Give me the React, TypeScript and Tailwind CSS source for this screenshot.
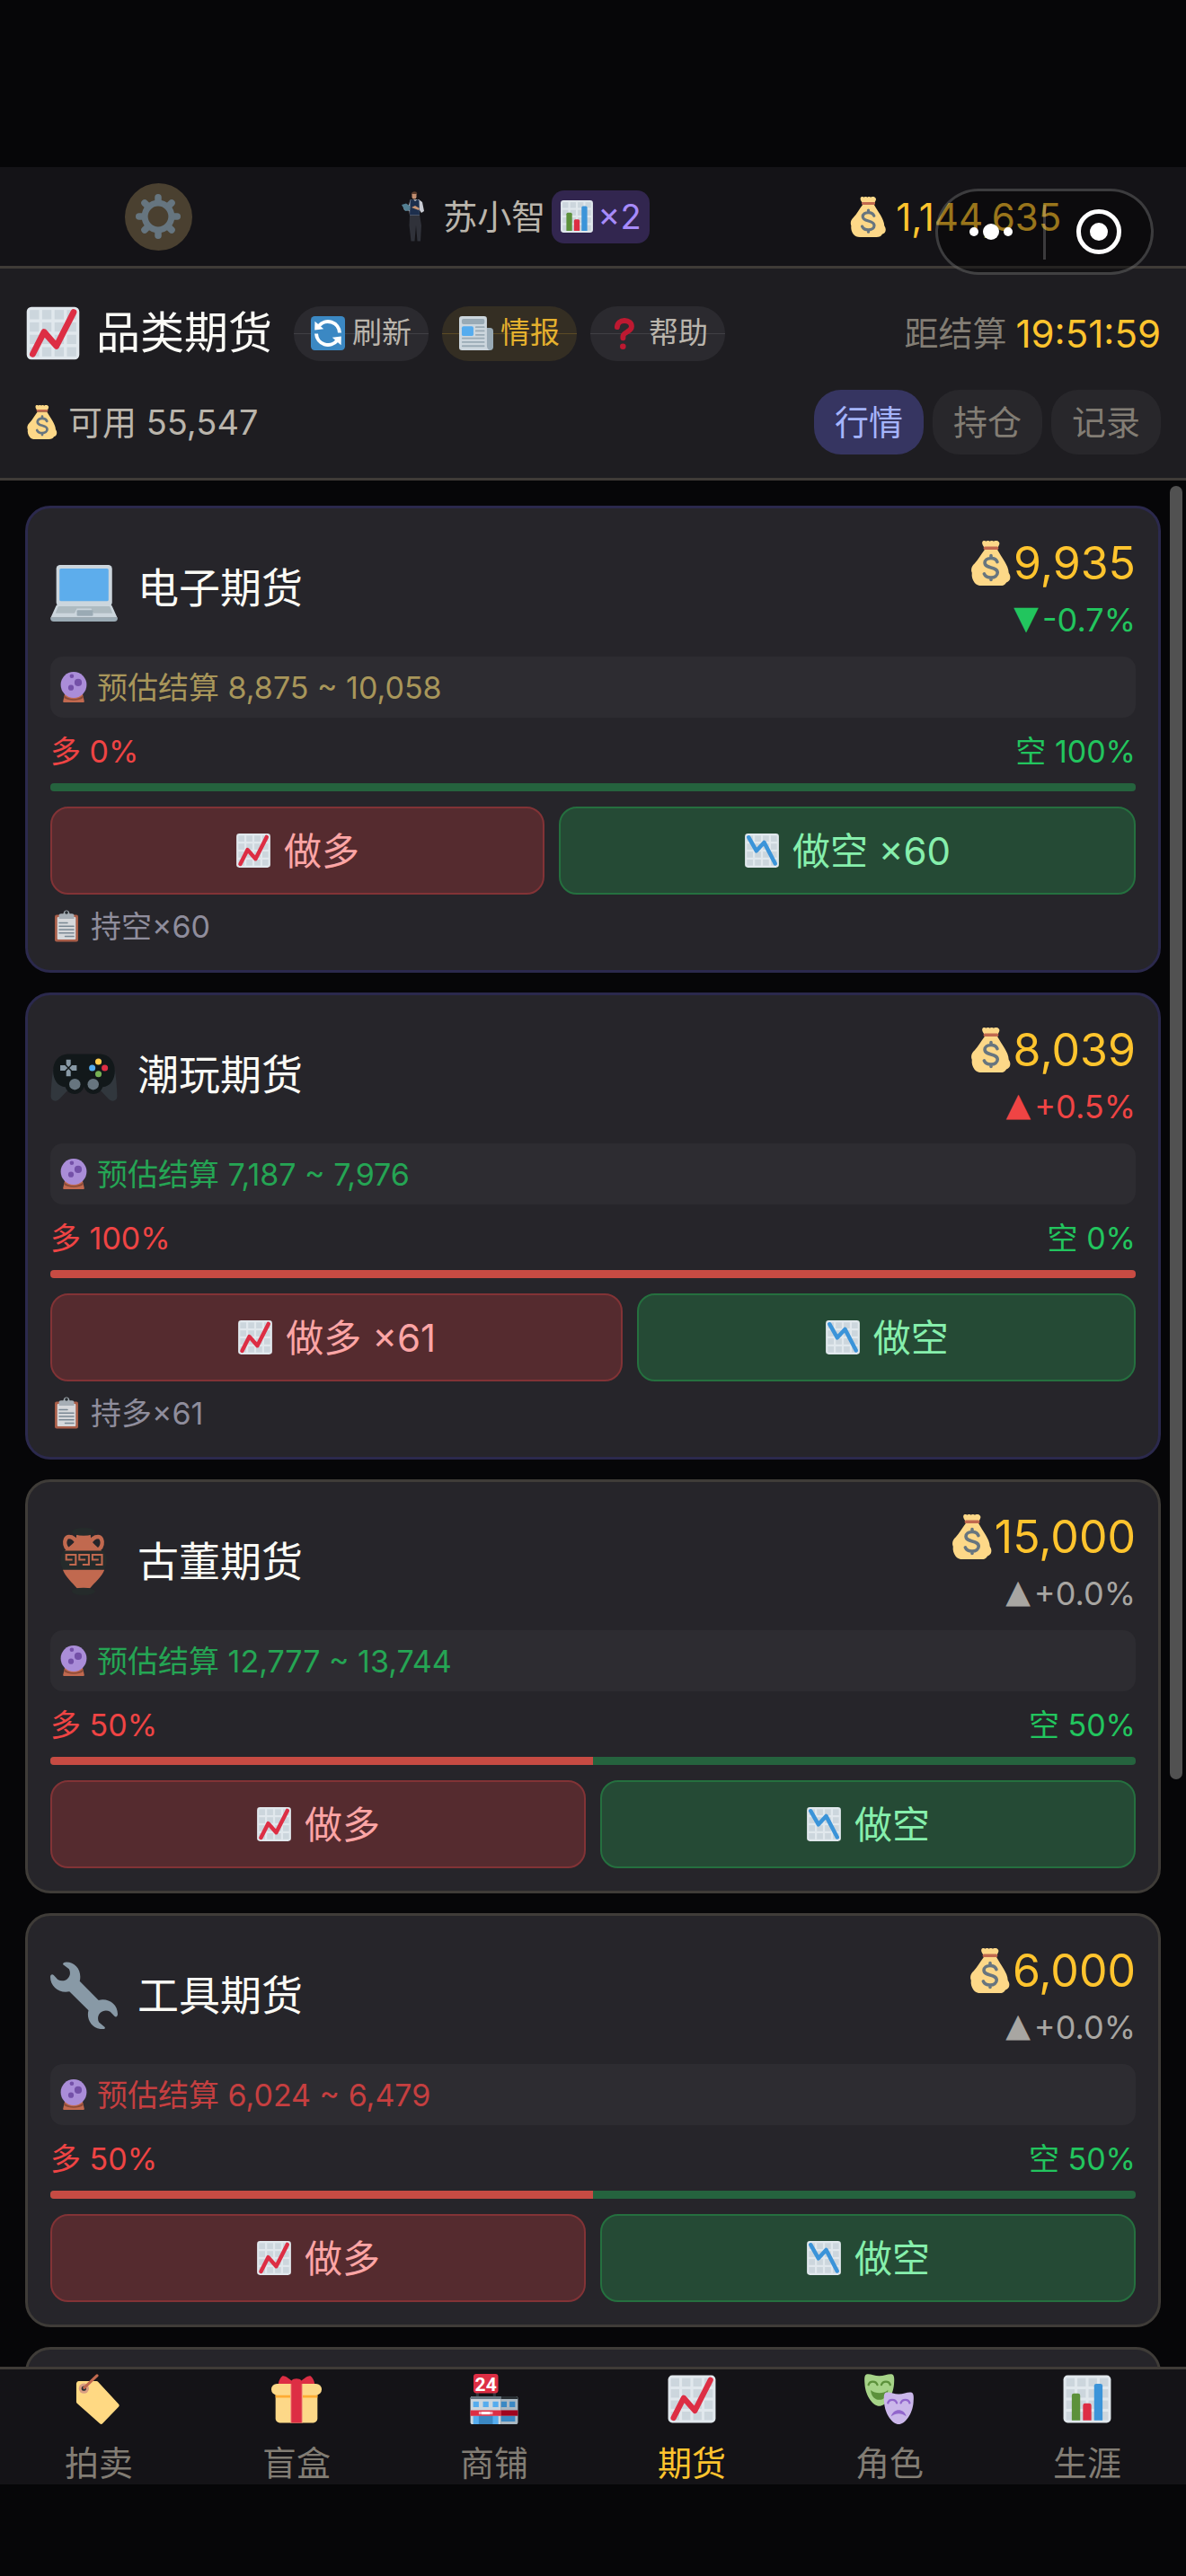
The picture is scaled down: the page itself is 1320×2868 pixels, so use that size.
import React from "react";

type IconProps = { className: string; children?: React.ReactNode };

function Icon({ className, children }: IconProps) {
  return (
    <svg viewBox="0 0 36 36" className={"shrink-0 " + className} aria-hidden="true" fill="none">
      {children}
    </svg>
  );
}

const gridSteps = [3, 11, 19, 27];

function ChartPaper() {
  return (
    <>
      <rect x="1" y="1" width="34" height="34" rx="3" fill="#E1E8ED" />
      {gridSteps.map((y) => gridSteps.map((x) => <rect key={x + "-" + y} x={x} y={y} width="6" height="6" fill="#CCD6DD" />))}
    </>
  );
}

function ChartUp({ className }: IconProps) {
  return (
    <Icon className={className}>
      <ChartPaper />
      <path d="M4.900 31.500 12.200 17.200 20.200 26.300 31.300 4.400" stroke="#DD2E44" strokeWidth="4" strokeLinecap="round" strokeLinejoin="round" />
    </Icon>
  );
}

function ChartDown({ className }: IconProps) {
  return (
    <Icon className={className}>
      <ChartPaper />
      <path d="M4.700 4.700 12.500 18.300 20.200 9.800 31.300 31" stroke="#3B94D9" strokeWidth="4" strokeLinecap="round" strokeLinejoin="round" />
    </Icon>
  );
}

function BarChart({ className }: IconProps) {
  return (
    <Icon className={className}>
      <ChartPaper />
      <path d="M7 33.200V15.500a1.500 1.500 0 0 1 1.500-1.500h3a1.500 1.500 0 0 1 1.500 1.500v17.700z" fill="#5C913B" />
      <path d="M15 33.200V22.500a1.500 1.500 0 0 1 1.500-1.500h3a1.500 1.500 0 0 1 1.500 1.500v10.700z" fill="#DD2E44" />
      <path d="M23 33.200V8.500A1.500 1.500 0 0 1 24.500 7h3A1.500 1.500 0 0 1 29 8.500v24.700z" fill="#3B94D9" />
    </Icon>
  );
}

function MoneyBag({ className }: IconProps) {
  return (
    <Icon className={className}>
      <path
        d="M13 7C9.500 11.500 8 15 4.600 18.600 2.300 20.600 1.700 23.500 2.700 25.800 2.300 29 3.200 31.500 4.800 33.600 6 35.300 8 36 10.500 36H25c3 0 4.300-.8 5.300-2.600C33.500 32.600 34.400 29 32.200 25.800 32 19.500 26.500 13.500 23 7z"
        fill="#FDD888"
      />
      <path d="M13 6C12 4.500 10.500 3 11 1c.3-1.200 2-1.400 2.900-.5 1.200-.8 2.300-.7 3.100 0 .8-.7 2.300-.7 3.200.1 1-1 2.700-1 3.500-.1C26 2 24 4 23.300 6z" fill="#FDD888" />
      <rect x="12" y="4.700" width="12" height="2.500" rx="1.100" fill="#C1694F" />
      <path
        d="M23 17c-.7-2-2.600-3-5-3-2.900 0-5 1.500-5 3.700 0 5 10.200 2.800 10.200 7.900 0 2.300-2.200 3.900-5.200 3.900-2.700 0-4.700-1-5.500-3M18 12v2M18 29.500v1.800"
        stroke="#67757F"
        strokeWidth="2.600"
        strokeLinecap="round"
      />
    </Icon>
  );
}

function Gear({ className }: IconProps) {
  const angles = [0, 45, 90, 135, 180, 225, 270, 315];
  return (
    <Icon className={className}>
      <circle cx="18" cy="18" r="10.700" stroke="#66757F" strokeWidth="5" />
      {angles.map((a) => (
        <path key={a} d="M18 6V2.700" stroke="#66757F" strokeWidth="5.400" strokeLinecap="round" transform={`rotate(${a} 18 18)`} />
      ))}
    </Icon>
  );
}

function Person({ className }: IconProps) {
  return (
    <svg viewBox="0 0 26 56" className={"shrink-0 " + className} aria-hidden="true">
      <path d="M9 26h11l2 12-1 17.500h-3.500L16 38l-1.500 17.500h-4L8.500 38z" fill="#30323a" />
      <path d="M9.500 9.500 19 9l4 3 2 10-3 2-2-3v5.500H9l-.5-5L3 21l-1-3 6-2z" fill="#c9cbd3" />
      <path d="M9.500 9.500 13 9l2 2 2.500-2 2 1 .5 16.500H9z" fill="#1d2f4d" />
      <path d="M0 15l5-1.500 4.500 3L9 21l-5 1z" fill="#537f93" />
      <path d="M11 18l4-2 5 3-1 2z" fill="#c99574" />
      <rect x="11.500" y="1" width="5" height="7.500" rx="2.200" fill="#c28e70" />
      <path d="M11 3c0-3 6-4 6.300 0z" fill="#5b3c2c" />
    </svg>
  );
}

function Refresh({ className }: IconProps) {
  return (
    <Icon className={className}>
      <rect width="36" height="36" rx="4" fill="#3B88C3" />
      <path d="M8.300 10.500A12.300 12.300 0 0 1 30.300 17.500M27.700 25.500A12.300 12.300 0 0 1 5.700 18.500" stroke="#fff" strokeWidth="3.800" />
      <path d="M4.200 5.400 4 14.600 13.500 13.600zM31.800 30.600 32 21.400 22.500 22.400z" fill="#fff" />
    </Icon>
  );
}

function Newspaper({ className }: IconProps) {
  return (
    <Icon className={className}>
      <rect x="24" y="12.300" width="12" height="23.700" rx="3.500" fill="#99AAB5" />
      <path d="M3 0h23.300a3 3 0 0 1 3 3v28c0 2 .7 4 2.700 5H3a3 3 0 0 1-3-3V3a3 3 0 0 1 3-3z" fill="#CCD6DD" />
      <rect x="2.800" y="2.800" width="24" height="5.700" rx="1.800" fill="#99AAB5" />
      <rect x="2.800" y="10.700" width="12.300" height="10.200" rx="1.800" fill="#55ACEE" />
      <path d="M17.800 11.500h8.400M17.800 15.600h8.400M17.800 19.700h8.400M3.600 23.300h22.600M3.600 27.400h22.600M3.600 31.500h22.600" stroke="#99AAB5" strokeWidth="1.700" strokeLinecap="round" />
    </Icon>
  );
}

function Question({ className }: IconProps) {
  return (
    <Icon className={className}>
      <path d="M10.300 11.500C10.500 7.200 13.500 4.800 18 4.800c4.700 0 7.500 2.500 7.500 6.200 0 6-9 5.500-9 10.200V23" stroke="#BE1931" strokeWidth="5.600" strokeLinecap="round" />
      <circle cx="16.400" cy="31.900" r="3.100" fill="#BE1931" />
    </Icon>
  );
}

function Laptop({ className }: IconProps) {
  return (
    <Icon className={className}>
      <rect x="3.200" y="5.800" width="29.800" height="22" rx="2" fill="#CCD6DD" />
      <rect x="4.900" y="7.700" width="26.200" height="17.400" rx=".8" fill="#5DADEC" />
      <path d="M4.800 26.700h26.400c1.200 0 1.700.6 2 1.500l2.600 5.800H.2l2.600-5.800c.3-.9.900-1.500 2-1.500z" fill="#CCD6DD" />
      <path d="M0 33.800h36c0 1.500-.6 2.200-1.800 2.200H1.800C.6 36 0 35.300 0 33.800z" fill="#9AAAB4" />
      <path d="M5 27.800h26c.6 0 1 .3 1.200 1l1 2.800H2.800l1-2.800c.2-.7.600-1 1.200-1z" fill="#AEBBC1" />
      <path d="M14.200 29h7.600l2 4h-11.600z" fill="#CCD6DD" />
      <rect x="14.200" y="29.900" width="8.600" height="3.100" rx=".5" fill="#9AAAB4" />
    </Icon>
  );
}

function Gamepad({ className }: IconProps) {
  return (
    <Icon className={className}>
      <path d="M1.500 15C.9 20 .3 25 .3 29.800.3 31 1.200 32 2.600 32c1 0 1.700-.4 2.300-1L11 24.500 4 12zM34.500 15c.6 5 1.200 10 1.200 14.800 0 1.200-.9 2.200-2.300 2.200-1 0-1.700-.4-2.300-1L25 24.500 32 12z" fill="#31373D" />
      <path d="M9.500 7h17c5 0 8 4 8 9 0 4.500-2.500 8.500-6.500 8.600A5.200 5.200 0 0 1 18 24.500 5.200 5.200 0 0 1 8 24.600C4 24.500 1.500 20.500 1.500 16c0-5 3-9 8-9z" fill="#12181A" />
      <path d="M8.500 10h2.400v3h3.200v2.800h-3.200v3H8.500v-3H5.300V13h3.200z" fill="#8899A6" />
      <path d="M7.900 12.600l3.600 3.600M11.500 12.600 7.900 16.200" stroke="#12181A" strokeWidth=".7" />
      <circle cx="25.700" cy="11" r="1.700" fill="#FFCC4D" />
      <circle cx="22.400" cy="14.400" r="1.700" fill="#55ACEE" />
      <circle cx="29.100" cy="14.400" r="1.700" fill="#DD2E44" />
      <circle cx="25.700" cy="17.600" r="1.700" fill="#77B255" />
      <circle cx="13.100" cy="23.100" r="3" fill="#67757F" />
      <circle cx="22.900" cy="23.100" r="3" fill="#67757F" />
    </Icon>
  );
}

function Amphora({ className }: IconProps) {
  return (
    <Icon className={className}>
      <path d="M12.500 11.500C7 13.500 6.500 4.800 10 4.800c2.300 0 3.300 1.500 4.300 3M23 11.500c5.500 2 6-6.700 2.500-6.700-2.300 0-3.300 1.500-4.300 3" stroke="#C1694F" strokeWidth="2.100" />
      <path d="M14 3.500h7.500c0 4.500 1.500 4.500 6 9H7.500c4.500-4.500 6.500-4.500 6.500-9z" fill="#C1694F" />
      <ellipse cx="17.800" cy="2.100" rx="6.200" ry="2.100" fill="#252B2B" />
      <path d="M7 12.200h21.600c2 3 2 7 .2 10.200H6.800c-1.800-3.200-1.800-7.200.2-10.200z" fill="#252B2B" />
      <path d="M6.700 22.400h22.200c-1.500 4-5 6.500-7.700 9.900h-7c-2.700-3.400-6-5.900-7.500-9.900z" fill="#C1694F" />
      <path
        d="M10.200 19.700h3.400v-5.300H8.500V17h3.300M17.200 19.700h3.400v-5.300h-5.100V17h3.300M24.200 19.700h3.400v-5.300h-5.100V17h3.300"
        stroke="#C1694F"
        strokeWidth="1"
      />
      <ellipse cx="17.700" cy="34" rx="6.200" ry="2" fill="#252B2B" />
    </Icon>
  );
}

function Wrench({ className }: IconProps) {
  return (
    <Icon className={className}>
      <path
        d="M6.700 1.400C6.900.5 7.600.2 8.600.2 12.800.2 16 3.600 16 8c0 1-.1 1.800-.3 2.400L25.800 20.600C31 19.300 36 22.800 36 28c0 1.400-1 1.900-1.700 1.100L32 26.800c-4-2.200-8 1.800-6 5.600l3 2.500c.5.500.2 1.200-.9 1.200-6.100 0-9-5.600-7.700-10.100L10.200 16C5 17.200 0 13.500 0 8.200 0 6.900 1 6.500 1.800 7.200L4 9.600c4 2.200 8-1.800 6-5.600z"
        fill="#8899A6"
      />
    </Icon>
  );
}

function CrystalBall({ className }: IconProps) {
  return (
    <Icon className={className}>
      <path d="M8 26h20l1.800 7.800c.1.700-.2 1.200-.8 1.200H7c-.6 0-.9-.5-.8-1.200z" fill="#C1694F" />
      <path d="M8 27.500c5 5 15 5 20 0l.7 2.500c-5.500 3.500-16 3.500-21.400 0z" fill="#8A4B38" />
      <circle cx="18" cy="15.500" r="14.400" fill="#AA8DD8" />
      <circle cx="15.900" cy="5.700" r="2.300" fill="#7450A8" />
      <circle cx="23" cy="12.900" r="4.100" fill="#7450A8" />
      <circle cx="15" cy="18.700" r="3.100" fill="#7450A8" />
    </Icon>
  );
}

function Clipboard({ className }: IconProps) {
  return (
    <Icon className={className}>
      <rect x="5" y="5.500" width="26" height="30" rx="2" fill="#C1694F" />
      <rect x="7.700" y="8" width="20.600" height="25" rx="1" fill="#F5F8FA" />
      <path d="M9.500 10V6.500c0-1.500 1-2.300 2.500-2.300h2.500C15 1.500 16.300.5 18 .5s3 1 3.500 3.700H24c1.500 0 2.500.8 2.500 2.300V10z" fill="#BDC7CE" />
      <circle cx="18" cy="3" r="1.800" fill="#292F33" />
      <path d="M10 14.500h9M10 18.300h16M10 22h16M10 25.800h16M16.500 29.600H26" stroke="#8899A6" strokeWidth="1.500" strokeLinecap="round" />
    </Icon>
  );
}

function Tag({ className }: IconProps) {
  return (
    <Icon className={className}>
      <path d="M3.700 6.600h12.600L31 22.600 19.700 34.400 3.400 20V7z" fill="#FFD983" stroke="#FFD983" strokeWidth="3" strokeLinejoin="round" />
      <circle cx="7.300" cy="10.400" r="3.600" fill="#D99E82" />
      <circle cx="7.300" cy="10.400" r="1.700" fill="#292F33" />
      <path d="M7.600 9.900 16.700 1.200" stroke="#C1694F" strokeWidth="2" strokeLinecap="round" />
    </Icon>
  );
}

function Gift({ className }: IconProps) {
  return (
    <Icon className={className}>
      <path d="M3 13h30v19a3 3 0 0 1-3 3H6a3 3 0 0 1-3-3z" fill="#FDD888" />
      <path d="M3 14h30v3H3z" fill="#FFAC33" />
      <rect x="0" y="7" width="36" height="8.200" rx="4" fill="#FDD888" />
      <path d="M13.500 7h9v28h-9z" fill="#F4A580" />
      <path d="M14.300 7h7.400v28h-7.400z" fill="#DD2E44" />
      <path d="M5 7C5.500 4.500 6.500 2.500 8 1.500c1.500-.7 4.500 1.700 6.500 3.300C15.500 3 20.500 3 21.500 4.800c2-1.600 5-4 6.500-3.300C29.500 2.500 30.500 4.500 31 7z" fill="#DD2E44" />
    </Icon>
  );
}

function Shop({ className }: IconProps) {
  return (
    <Icon className={className}>
      <path d="M5 13h2v4H5zM17.200 13h2v4h-2z" fill="#31373D" />
      <rect x="3.200" y="0" width="17.700" height="13.800" rx="2" fill="#DD2E44" />
      <text x="12" y="12" textAnchor="middle" fontSize="13.500" fontWeight="700" fill="#fff" className="font-['Roboto',sans-serif]">
        24
      </text>
      <path d="M2.500 16H23v20H2.500C1.500 36 1 35.500 1 34.500v-17C1 16.500 1.500 16 2.500 16z" fill="#CCD6DD" />
      <path d="M23 16h10.500c1 0 1.500.5 1.500 1.500v17c0 1-.5 1.500-1.500 1.500H23z" fill="#AAB8C2" />
      <path d="M2.500 16H23v2H1c0-1.300.5-2 1.500-2z" fill="#66757F" />
      <path d="M23 16h10.500c1 0 1.500.7 1.500 2H23z" fill="#292F33" />
      <path d="M3 19.800h4v4H3zM10 19.800h4v4h-4zM17 19.800h4v4h-4zM3 30h18v6H3z" fill="#55ACEE" />
      <path d="M23 19.800h4v4h-4zM29 19.800h4v4h-4zM7 30h10v6H7zM23 30h10v4H23z" fill="#3B88C3" />
      <path d="M1 26h22v4H1z" fill="#DD2E44" />
      <path d="M23 26h12v4H23z" fill="#A0041E" />
      <path d="M7 27h10v2H7z" fill="#F4ABBA" />
      <path d="M9 27h6v2H9z" fill="#fff" />
    </Icon>
  );
}

const maskShape =
  "M1.500.4C4-.3 7 1.500 10.700 1.500S17.500-.3 20 .4c1.600.7 1.500 3.600 1.200 7.100C20.500 16 15 23 10.700 23S.9 16 .3 7.500C0 4-.2 1.100 1.500.4z";

function Masks({ className }: IconProps) {
  return (
    <Icon className={className}>
      <path d={maskShape} fill="#A6D388" />
      <path d="M3 7.800c.8-3 5.300-3 6.300 0M12.200 7.800c1-3 5.500-3 6.300 0" stroke="#5C913B" strokeWidth="1.500" strokeLinecap="round" />
      <path d="M4.500 11.500c3.500 2.800 9 2.800 12.500 0-.5 4.700-3.200 7-6.300 7s-5.700-2.300-6.200-7z" fill="#5C913B" />
      <g transform="translate(13.900 13)">
        <path d={maskShape} fill="#CBB7EA" />
        <path d="M3 7.800c.8-3 5.300-3 6.300 0M12.200 7.800c1-3 5.500-3 6.300 0" stroke="#9266CC" strokeWidth="1.500" strokeLinecap="round" />
        <path d="M5.300 17.300c1.500-6 9.300-6 10.800 0-3.500-2.500-7.300-2.500-10.800 0z" fill="#9266CC" />
      </g>
    </Icon>
  );
}

type Future = {
  name: string;
  icon: React.ReactNode;
  price: string;
  change: string;
  arrow: string;
  changeClass: string;
  estimate: string;
  estimateClass: string;
  long: number;
  longQty?: string;
  shortQty?: string;
  note?: string;
};

const futures: Future[] = [
  {
    name: "电子期货",
    icon: <Laptop className="size-[75px]" />,
    price: "9,935",
    change: "-0.7%",
    arrow: "▼",
    changeClass: "text-[#22c55e]",
    estimate: "预估结算 8,875 ~ 10,058",
    estimateClass: "text-[#a8965a]",
    long: 0,
    shortQty: "×60",
    note: "持空×60",
  },
  {
    name: "潮玩期货",
    icon: <Gamepad className="size-[75px]" />,
    price: "8,039",
    change: "+0.5%",
    arrow: "▲",
    changeClass: "text-[#ef4444]",
    estimate: "预估结算 7,187 ~ 7,976",
    estimateClass: "text-[#25a554]",
    long: 100,
    longQty: "×61",
    note: "持多×61",
  },
  {
    name: "古董期货",
    icon: <Amphora className="size-[75px]" />,
    price: "15,000",
    change: "+0.0%",
    arrow: "▲",
    changeClass: "text-[#a8a6a2]",
    estimate: "预估结算 12,777 ~ 13,744",
    estimateClass: "text-[#25a554]",
    long: 50,
  },
  {
    name: "工具期货",
    icon: <Wrench className="size-[75px]" />,
    price: "6,000",
    change: "+0.0%",
    arrow: "▲",
    changeClass: "text-[#a8a6a2]",
    estimate: "预估结算 6,024 ~ 6,479",
    estimateClass: "text-[#c53f40]",
    long: 50,
  },
];

const cardBase = "shrink-0 rounded-[28px] border-[3px] bg-[#26252a] p-[25px] ";

function FutureCard({ f }: { f: Future }) {
  return (
    <article className={cardBase + (f.note ? "border-[#2b294d]" : "border-[#3f3c38]")}>
      <div className="flex items-center justify-between">
        <div className="flex items-center gap-[22px]">
          {f.icon}
          <h2 className="text-[46px] leading-[72px] text-[#fafaf5]">{f.name}</h2>
        </div>
        <div className="flex flex-col items-end">
          <div className="flex items-center text-[50px] leading-[72px] text-[#ffc42e]">
            <MoneyBag className="size-[50px]" />
            {f.price}
          </div>
          <div className={"flex h-[54px] items-center gap-1 text-[36px] " + f.changeClass}>
            <span className="pb-1 font-['DejaVu_Sans',sans-serif] leading-none">{f.arrow}</span>
            {f.change}
          </div>
        </div>
      </div>
      <div className={"mt-[14px] flex h-[68px] items-center gap-2 rounded-[14px] bg-[#2d2c31] px-2 text-[34px] " + f.estimateClass}>
        <CrystalBall className="size-9" />
        {f.estimate}
      </div>
      <div className="mt-[15px] flex justify-between text-[34px] leading-[46px]">
        <span className="text-[#ef4444]">多 {f.long}%</span>
        <span className="text-[#22c55e]">空 {100 - f.long}%</span>
      </div>
      <div className="mt-3 flex h-[9px] overflow-hidden rounded bg-[#25633e]">
        <div className="bg-[#c74b43]" style={{ width: f.long + "%" }} />
      </div>
      <div className="mt-[17px] flex gap-4 text-[42px]">
        <button className="flex h-[98px] flex-auto items-center justify-center gap-[14px] rounded-[20px] border-2 border-[#823336] bg-[#552b2f] text-[#fca5a5]">
          <ChartUp className="size-10" />
          <span>做多{f.longQty ? " " + f.longQty : ""}</span>
        </button>
        <button className="flex h-[98px] flex-auto items-center justify-center gap-[14px] rounded-[20px] border-2 border-[#25703f] bg-[#254a35] text-[#86efac]">
          <ChartDown className="size-10" />
          <span>做空{f.shortQty ? " " + f.shortQty : ""}</span>
        </button>
      </div>
      {f.note && (
        <div className="mt-[11px] flex h-12 items-center gap-[9px] text-[34px] text-[#8f8d9c]">
          <Clipboard className="size-9 opacity-85" />
          {f.note}
        </div>
      )}
    </article>
  );
}

const pillBase =
  "relative isolate flex h-[61px] items-center gap-2 rounded-[30px] px-[19px] text-[33px] after:absolute after:inset-x-0 after:top-[30px] after:-z-10 after:h-px";

const tabs = ["行情", "持仓", "记录"];

const navItems = [
  { label: "拍卖", icon: <Tag className="size-14" /> },
  { label: "盲盒", icon: <Gift className="size-14" /> },
  { label: "商铺", icon: <Shop className="size-14" /> },
  { label: "期货", icon: <ChartUp className="size-14" />, active: true },
  { label: "角色", icon: <Masks className="size-14" /> },
  { label: "生涯", icon: <BarChart className="size-14" /> },
];

export default function App() {
  return (
    <div className="relative flex h-screen flex-col overflow-hidden bg-[#060608] pt-[186px] pb-[102px] font-['Inter','Noto_Sans_CJK_SC',sans-serif]">
      <div className="relative flex h-[113px] shrink-0 items-center justify-around border-b-[3px] border-[#3f3b37] bg-[#141317] px-7">
        <button aria-label="设置" className="flex size-[75px] items-center justify-center rounded-full bg-[#4a4030]">
          <Gear className="size-[50px]" />
        </button>
        <div className="flex items-center text-[38px] text-[#bab5ac]">
          <div className="mr-2 flex w-[50px] justify-center">
            <Person className="h-14 w-[26px]" />
          </div>
          苏小智
          <div className="ml-[7px] flex h-[59px] items-center gap-1 rounded-[14px] bg-[#32264f] px-[9px] text-[#a78bfa]">
            <BarChart className="size-[38px]" />
            ×2
          </div>
        </div>
        <div className="flex items-center gap-2 text-[42px] text-[#ffc42e]">
          <MoneyBag className="size-[45px]" />
          1,144,635
        </div>
        <div className="absolute top-[24px] right-9 z-10 flex h-24 w-[243px] items-center rounded-full border-[3px] border-white/20 bg-black/40">
          <button aria-label="更多" className="flex h-full flex-1 items-center justify-center gap-[5px]">
            <span className="size-[10px] rounded-full bg-white" />
            <span className="size-[18px] rounded-full bg-white" />
            <span className="size-[10px] rounded-full bg-white" />
          </button>
          <span className="h-[61px] w-[3px] bg-white/20" />
          <button aria-label="关闭" className="flex h-full flex-1 items-center justify-center">
            <span className="flex size-[50px] items-center justify-center rounded-full border-[5px] border-white">
              <span className="size-5 rounded-full bg-white" />
            </span>
          </button>
        </div>
      </div>

      <header className="flex h-[236px] shrink-0 flex-col border-b-[3px] border-[#3f3b37] bg-[#1e1d21] px-7 pt-[41px]">
        <div className="flex h-[62px] items-center">
          <ChartUp className="size-[62px]" />
          <h1 className="mr-6 ml-[17px] text-[49px] leading-[62px] text-[#fafaf5]">品类期货</h1>
          <div className="flex gap-[15px]">
            <button className={pillBase + " bg-[#2b2a2f] text-[#bab5ac] after:bg-white/10"}>
              <Refresh className="size-[38px]" />
              刷新
            </button>
            <button className={pillBase + " bg-[#342e23] text-[#e5b12e] after:bg-[#ffc42e]/20"}>
              <Newspaper className="size-[38px]" />
              情报
            </button>
            <button className={pillBase + " bg-[#2b2a2f] text-[#bab5ac] after:bg-white/10"}>
              <Question className="size-[38px]" />
              帮助
            </button>
          </div>
          <div className="ml-auto flex items-center gap-[10px] text-[38px] text-[#827d74]">
            距结算
            <span className="text-[42px] text-[#ffc42e]">19:51:59</span>
          </div>
        </div>
        <div className="mt-8 flex items-center justify-between text-[38px] leading-[72px]">
          <div className="flex items-center gap-[10px] text-[#bab5ac]">
            <MoneyBag className="size-[38px]" />
            可用 55,547
          </div>
          <div className="flex gap-[10px]">
            {tabs.map((t, i) => (
              <button
                key={t}
                className={"h-[72px] rounded-[30px] px-[23px] " + (i === 0 ? "bg-[#363561] text-[#a5b4fc]" : "bg-[#28272b] text-[#827d74]")}
              >
                {t}
              </button>
            ))}
          </div>
        </div>
      </header>

      <main className="relative min-h-0 flex-1 overflow-hidden">
        <div className="flex h-full flex-col gap-[22px] overflow-hidden p-7 pb-0">
          {futures.map((f) => (
            <FutureCard key={f.name} f={f} />
          ))}
          <article className={cardBase + "min-h-60 border-[#3f3c38]"} />
        </div>
        <div className="absolute top-[6px] right-1 h-[1440px] w-[14px] rounded-full bg-[#515151]" />
      </main>

      <nav className="grid h-[131px] shrink-0 grid-cols-6 border-t-[3px] border-[#3f3b37] bg-[#141317]">
        {navItems.map((n) => (
          <a
            key={n.label}
            href="#"
            className={"flex flex-col items-center gap-4 pt-[5px] text-[38px] leading-[54px] " + (n.active ? "text-[#ffc42e]" : "text-[#827d74]")}
          >
            {n.icon}
            {n.label}
          </a>
        ))}
      </nav>
    </div>
  );
}
